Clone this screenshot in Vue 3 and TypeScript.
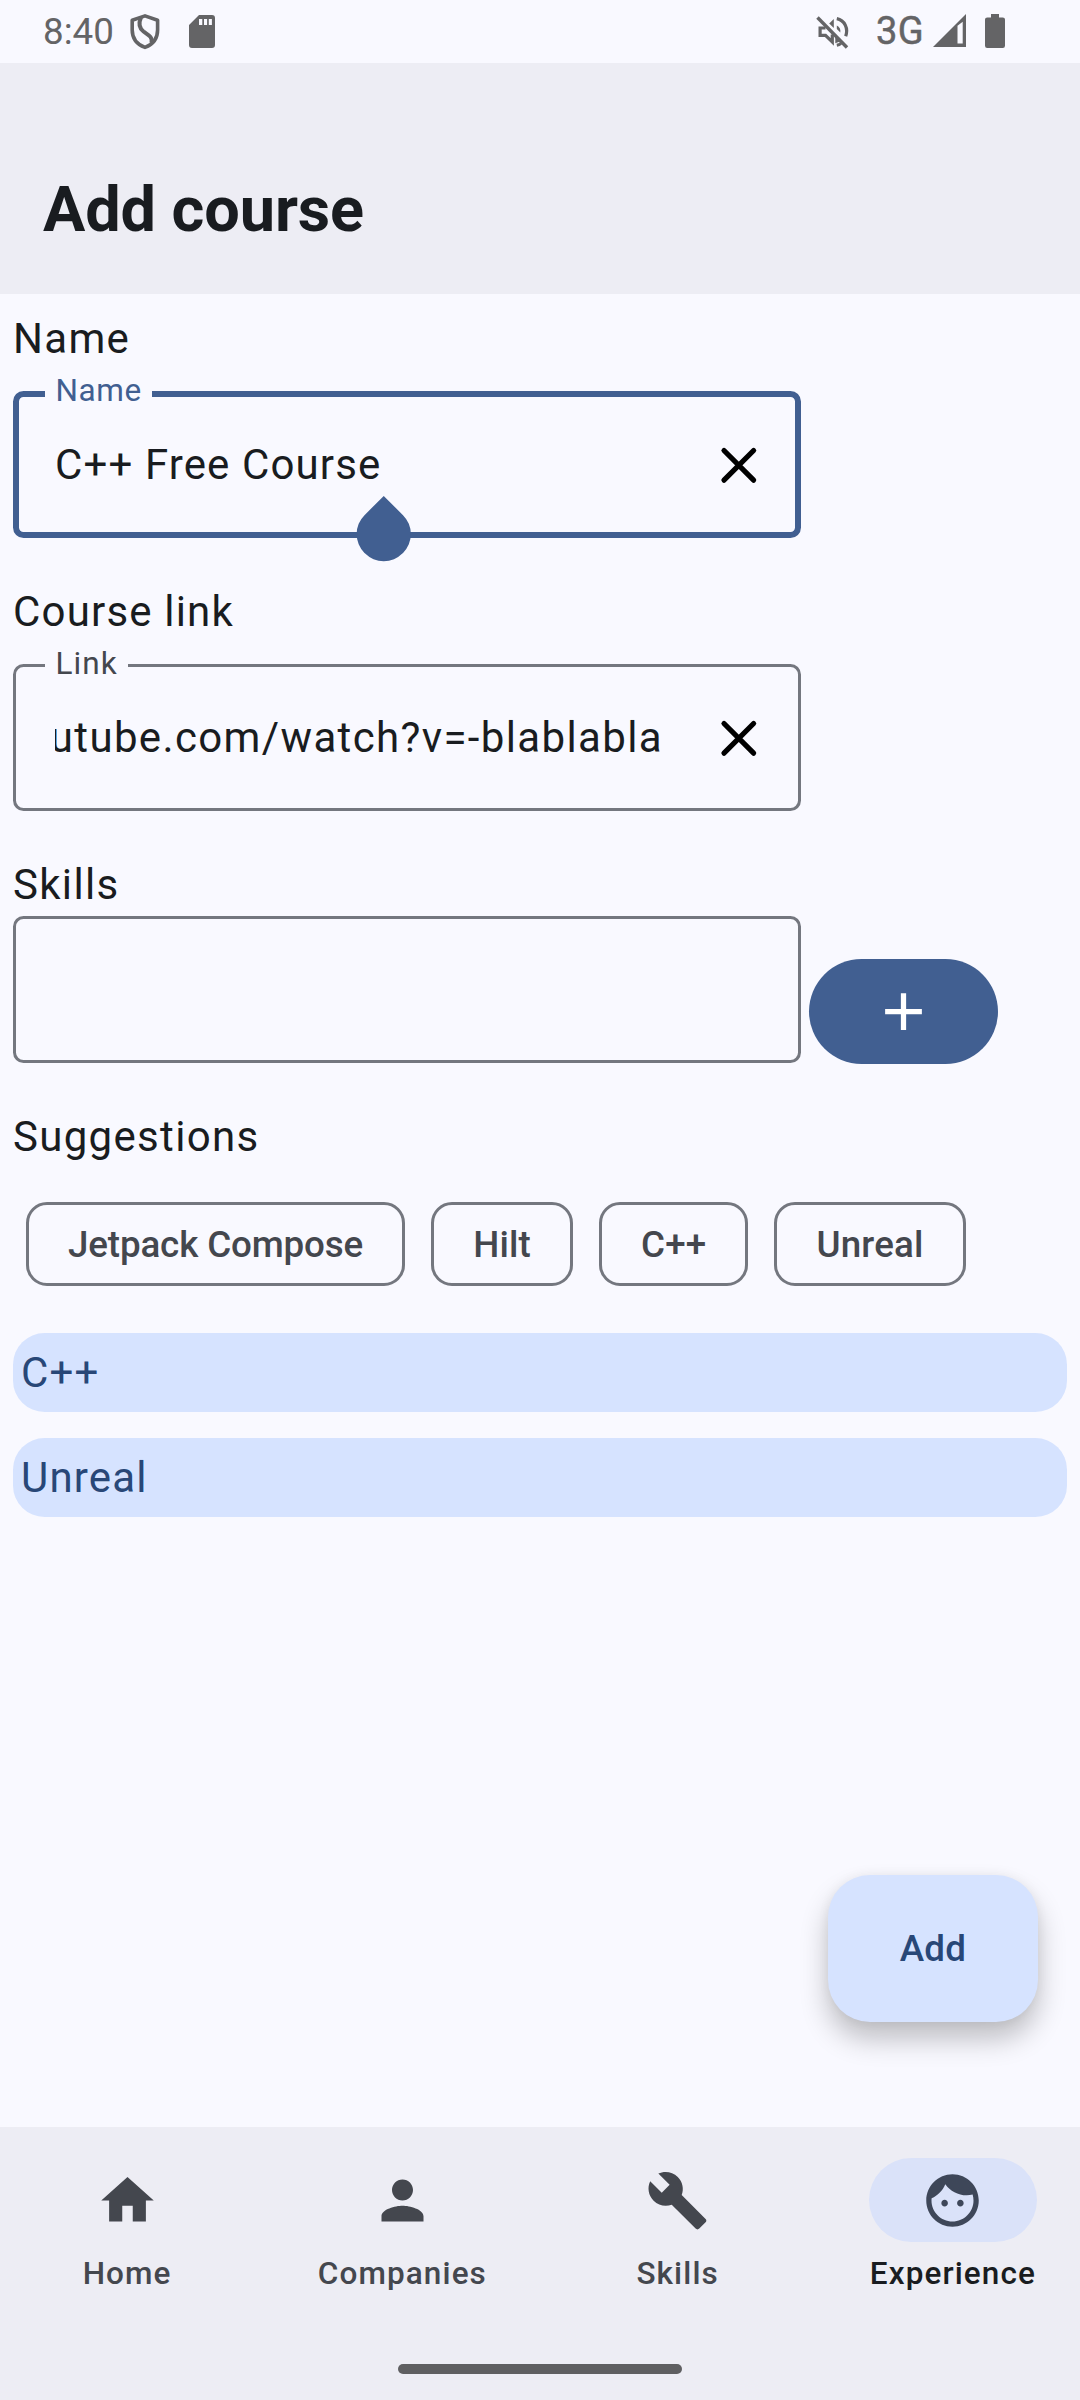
<script setup lang="ts">
import { ref } from 'vue'

interface NavItem {
  label: string
  path: string
}

const courseName = ref('C++ Free Course')
const courseLink = ref('utube.com/watch?v=-blablabla')
const suggestions = ['Jetpack Compose', 'Hilt', 'C++', 'Unreal']
const chosen = ref(['C++', 'Unreal'])
const current = ref('Experience')

const nav: NavItem[] = [
  { label: 'Home', path: 'M10 20v-6h4v6h5v-8h3L12 3 2 12h3v8z' },
  {
    label: 'Companies',
    path: 'M12 12c2.21 0 4-1.79 4-4s-1.79-4-4-4-4 1.79-4 4 1.79 4 4 4zm0 2c-2.67 0-8 1.34-8 4v2h16v-2c0-2.66-5.33-4-8-4z',
  },
  {
    label: 'Skills',
    path: 'M22.7 19l-9.1-9.1c.9-2.3.4-5-1.5-6.9-2-2-5-2.4-7.4-1.3L9 6 6 9 1.6 4.7C.4 7.1.9 10.1 2.9 12.1c1.9 1.9 4.6 2.4 6.9 1.5l9.1 9.1c.4.4 1 .4 1.4 0l2.3-2.3c.5-.4.5-1.1.1-1.4z',
  },
  {
    label: 'Experience',
    path: 'M9 11.75c-.69 0-1.25.56-1.25 1.25s.56 1.25 1.25 1.25 1.25-.56 1.25-1.25-.56-1.25-1.25-1.25zm6 0c-.69 0-1.25.56-1.25 1.25s.56 1.25 1.25 1.25 1.25-.56 1.25-1.25-.56-1.25-1.25-1.25zM12 2C6.48 2 2 6.48 2 12s4.48 10 10 10 10-4.48 10-10S17.52 2 12 2zm0 18c-4.41 0-8-3.59-8-8 0-.29.02-.58.05-.86 2.36-1.05 4.23-2.98 5.21-5.37C11.07 8.33 14.05 10 17.42 10c.78 0 1.53-.09 2.25-.26.21.71.33 1.47.33 2.26 0 4.41-3.59 8-8 8z',
  },
]
</script>

<template>
  <div class="screen">
    <div class="status">
      <span class="clock">8:40</span>
      <svg class="shield" width="30" height="36" viewBox="0 0 30 36" fill="none" stroke="#646466" stroke-width="3.6" stroke-linejoin="round">
        <path d="M15 1.9 27.6 6.3V16c0 8.500-5.100 14.600-12.600 17.400C7.500 30.600 2.200 24.500 2.200 16V6.300z" />
        <path d="M11 3.500C9 8 8.500 13.500 13.500 17.500C17.500 20.500 23 22.500 21.500 29" stroke-width="4" />
      </svg>
      <svg class="sd" width="26" height="33" viewBox="0 0 26 33">
        <path fill="#646466" fill-rule="evenodd" d="M10 0H23a3 3 0 0 1 3 3V30a3 3 0 0 1-3 3H3a3 3 0 0 1-3-3V10zM10 4V10H13.300V4zM15 4V10H18.100V4zM19.800 4V10H22.900V4z" />
      </svg>
      <span class="spacer"></span>
      <svg class="mute" width="33" height="34" viewBox="0 0 33 34" fill="none" stroke="#646466">
        <path d="M1.500 1.500 31 31.500" stroke-width="3.400" />
        <path d="M9.500 12H4.100V19.300H9.500L16.300 26V18.500" stroke-width="3.200" />
        <path d="M13.200 7.600 17.800 3V12z" fill="#646466" stroke="none" />
        <path d="M20.800 9.500C23.600 10.800 24.800 13.500 24.300 16.600L20.800 13.100z" fill="#646466" stroke="none" />
        <path d="M20.800 2.600C28.500 4.200 32.600 12 29.700 20.200" stroke-width="3.200" />
        <path d="M20.800 29.200C22.300 28.900 23.800 28.300 25 27.300M20.800 21V25L23.500 24" stroke-width="3" />
      </svg>
      <span class="net">3G</span>
      <svg class="signal" width="33" height="33" viewBox="0 0 33 33">
        <path fill="#646466" fill-rule="evenodd" d="M33 0V33H0zM24.500 11.800V29.500H29.700V7.800z" />
      </svg>
      <svg class="battery" width="20" height="34" viewBox="0 0 20 34">
        <path fill="#646466" d="M6 0H14V3.400H17.800A2.200 2.200 0 0 1 20 5.600V31.800A2.200 2.200 0 0 1 17.800 34H2.200A2.200 2.200 0 0 1 0 31.800V5.600A2.200 2.200 0 0 1 2.200 3.400H6z" />
      </svg>
    </div>

    <header class="topbar"><h1>Add course</h1></header>

    <main class="form">
      <label class="caption">Name</label>
      <div class="field focused labelled">
        <span class="float">Name</span>
        <span class="value">{{ courseName }}</span>
        <button class="clear" aria-label="Clear name">
          <svg width="63" height="63" viewBox="0 0 63 63"><path d="M17 17.500 46.600 47.100M46.600 17.500 17 47.100" /></svg>
        </button>
        <span class="handle"></span>
      </div>

      <label class="caption next link">Course link</label>
      <div class="field labelled">
        <span class="float">Link</span>
        <span class="value scrolled"><span>{{ courseLink }}</span></span>
        <button class="clear" aria-label="Clear link">
          <svg width="63" height="63" viewBox="0 0 63 63"><path d="M17 17.500 46.600 47.100M46.600 17.500 17 47.100" /></svg>
        </button>
      </div>

      <label class="caption next">Skills</label>
      <div class="skillrow">
        <div class="field"></div>
        <button class="plus" aria-label="Add skill">
          <svg width="63" height="63" viewBox="0 0 24 24"><path fill="#fff" d="M19 13h-6v6h-2v-6H5v-2h6V5h2v6h6v2z" /></svg>
        </button>
      </div>

      <div class="caption next">Suggestions</div>
      <div class="chips">
        <button v-for="s in suggestions" :key="s" class="chip">{{ s }}</button>
      </div>

      <ul class="chosen">
        <li v-for="s in chosen" :key="s">{{ s }}</li>
      </ul>

      <button class="fab">Add</button>
    </main>

    <footer class="bottom">
      <nav>
        <a v-for="item in nav" :key="item.label" :class="{ active: item.label === current }">
          <span class="pill">
            <svg width="63" height="63" viewBox="0 0 24 24"><path fill="currentColor" :d="item.path" /></svg>
          </span>
          <span class="navlabel">{{ item.label }}</span>
        </a>
      </nav>
      <div class="gesture"></div>
    </footer>
  </div>
</template>

<style>
body {
  background: #f9f9ff;
}
</style>

<style scoped>
.screen,
.screen * {
  box-sizing: border-box;
}
.screen {
  width: 1080px;
  height: 2400px;
  display: flex;
  flex-direction: column;
  overflow: hidden;
  background: #f9f9ff;
  color: #191c20;
  font-family: Roboto, 'Liberation Sans', sans-serif;
  font-size: 42px;
  line-height: 63px;
  letter-spacing: 1.3125px;
}
button {
  border: 0;
  padding: 0;
  background: none;
  font: inherit;
  color: inherit;
  letter-spacing: inherit;
}
svg {
  display: block;
  flex: none;
}
.status {
  height: 63px;
  padding: 0 75px 0 43px;
  display: flex;
  align-items: flex-start;
  color: #646466;
  font-size: 36.75px;
  line-height: 43px;
  letter-spacing: 0;
}
.clock {
  width: 86px;
  padding-top: 10px;
}
.shield {
  margin: 13.500px 0 0 0.500px;
}
.sd {
  margin: 15px 0 0 29.500px;
}
.spacer {
  flex: 1;
}
.mute {
  margin: 15.500px 27.500px 0 0;
}
.net {
  width: 57px;
  padding-top: 10px;
  font-size: 38px;
  letter-spacing: 0.300px;
  -webkit-text-stroke: 0.500px #646466;
}
.signal {
  margin: 14px 19px 0 0;
}
.battery {
  margin-top: 14px;
}
.topbar {
  height: 231px;
  padding: 105px 43px 0;
  background: #ededf4;
}
h1 {
  margin: 0;
  font-size: 63px;
  line-height: 84px;
  font-weight: 700;
  letter-spacing: -0.100px;
}
.form {
  position: relative;
  flex: 1;
  padding: 13px;
  display: flex;
  flex-direction: column;
}
.caption {
  display: block;
  height: 63px;
}
.next {
  margin-top: 42px;
}
.link {
  letter-spacing: 1.180px;
}
.field {
  position: relative;
  width: 788px;
  height: 147px;
  display: flex;
  align-items: center;
  justify-content: space-between;
  border: 3px solid #74777f;
  border-radius: 10.500px;
  padding-left: 39px;
}
.labelled {
  margin-top: 21px;
}
.focused {
  border: 6px solid #415f91;
  padding-left: 36px;
}
.float {
  position: absolute;
  left: 29px;
  top: -24px;
  padding: 0 10.500px;
  background: #f9f9ff;
  color: #44474e;
  font-size: 31.500px;
  line-height: 42px;
  letter-spacing: 1.05px;
}
.focused .float {
  left: 26px;
  top: -27px;
  color: #415f91;
  letter-spacing: 0.600px;
}
.value {
  white-space: nowrap;
  letter-spacing: 1.120px;
}
.scrolled {
  width: 608px;
  display: flex;
  justify-content: flex-end;
  overflow: hidden;
  letter-spacing: 1.360px;
}
.clear {
  width: 126px;
  height: 126px;
  margin-right: -3px;
  display: grid;
  place-items: center;
}
.focused .clear {
  margin-right: -6px;
}
.clear path {
  fill: none;
  stroke: #000;
  stroke-width: 5.250px;
  stroke-linecap: round;
}
.handle {
  position: absolute;
  left: 337.700px;
  top: 110px;
  width: 53.500px;
  height: 53.500px;
  background: #415f91;
  border-radius: 0 50% 50% 50%;
  transform: rotate(45deg);
}
.skillrow {
  display: flex;
  align-items: flex-end;
  gap: 8px;
}
.plus {
  width: 189px;
  height: 105px;
  margin-bottom: -1px;
  border-radius: 52.500px;
  background: #415f91;
  display: grid;
  place-items: center;
}
.chips {
  margin: 34px 13px 0;
  display: flex;
  gap: 26px;
}
.chip {
  height: 84px;
  padding: 2px 39px 0;
  border: 3px solid #74777f;
  border-radius: 21px;
  color: #44474e;
  font-size: 36.750px;
  line-height: 52.500px;
  font-weight: 500;
  letter-spacing: 0.200px;
}
.chip:first-child {
  letter-spacing: -0.140px;
}
.chosen {
  margin: 47px 0 0;
  padding: 0;
  list-style: none;
  display: flex;
  flex-direction: column;
  gap: 26px;
}
.chosen li {
  height: 79px;
  padding: 8px;
  border-radius: 31.500px;
  background: #d6e3ff;
  color: #284777;
  letter-spacing: 1.150px;
}
.fab {
  position: absolute;
  right: 42px;
  bottom: 105px;
  width: 210px;
  height: 147px;
  padding-top: 1px;
  border-radius: 42px;
  background: #d6e3ff;
  color: #284777;
  font-size: 36.750px;
  line-height: 52.500px;
  font-weight: 500;
  letter-spacing: 0.2625px;
  box-shadow: 0 17px 28px rgba(0, 0, 0, 0.24), 0 0 12px rgba(0, 0, 0, 0.05);
}
.bottom {
  height: 273px;
  padding-top: 31px;
  background: #ededf4;
  display: flex;
  flex-direction: column;
  align-items: center;
}
nav {
  width: 100%;
  height: 206px;
  display: flex;
  gap: 21px;
}
nav a {
  flex: 1 1 0;
  display: flex;
  flex-direction: column;
  align-items: center;
  gap: 11px;
  color: #44474e;
}
.pill {
  width: 168px;
  height: 84px;
  border-radius: 42px;
  display: grid;
  place-items: center;
}
.navlabel {
  font-size: 31.500px;
  line-height: 42px;
  font-weight: 500;
  letter-spacing: 1.100px;
}
.active .pill {
  background: #dae2f9;
  color: #3e4759;
}
.active .navlabel {
  color: #191c20;
}
.gesture {
  width: 284px;
  height: 10px;
  border-radius: 5px;
  background: #5f5f61;
}
</style>
